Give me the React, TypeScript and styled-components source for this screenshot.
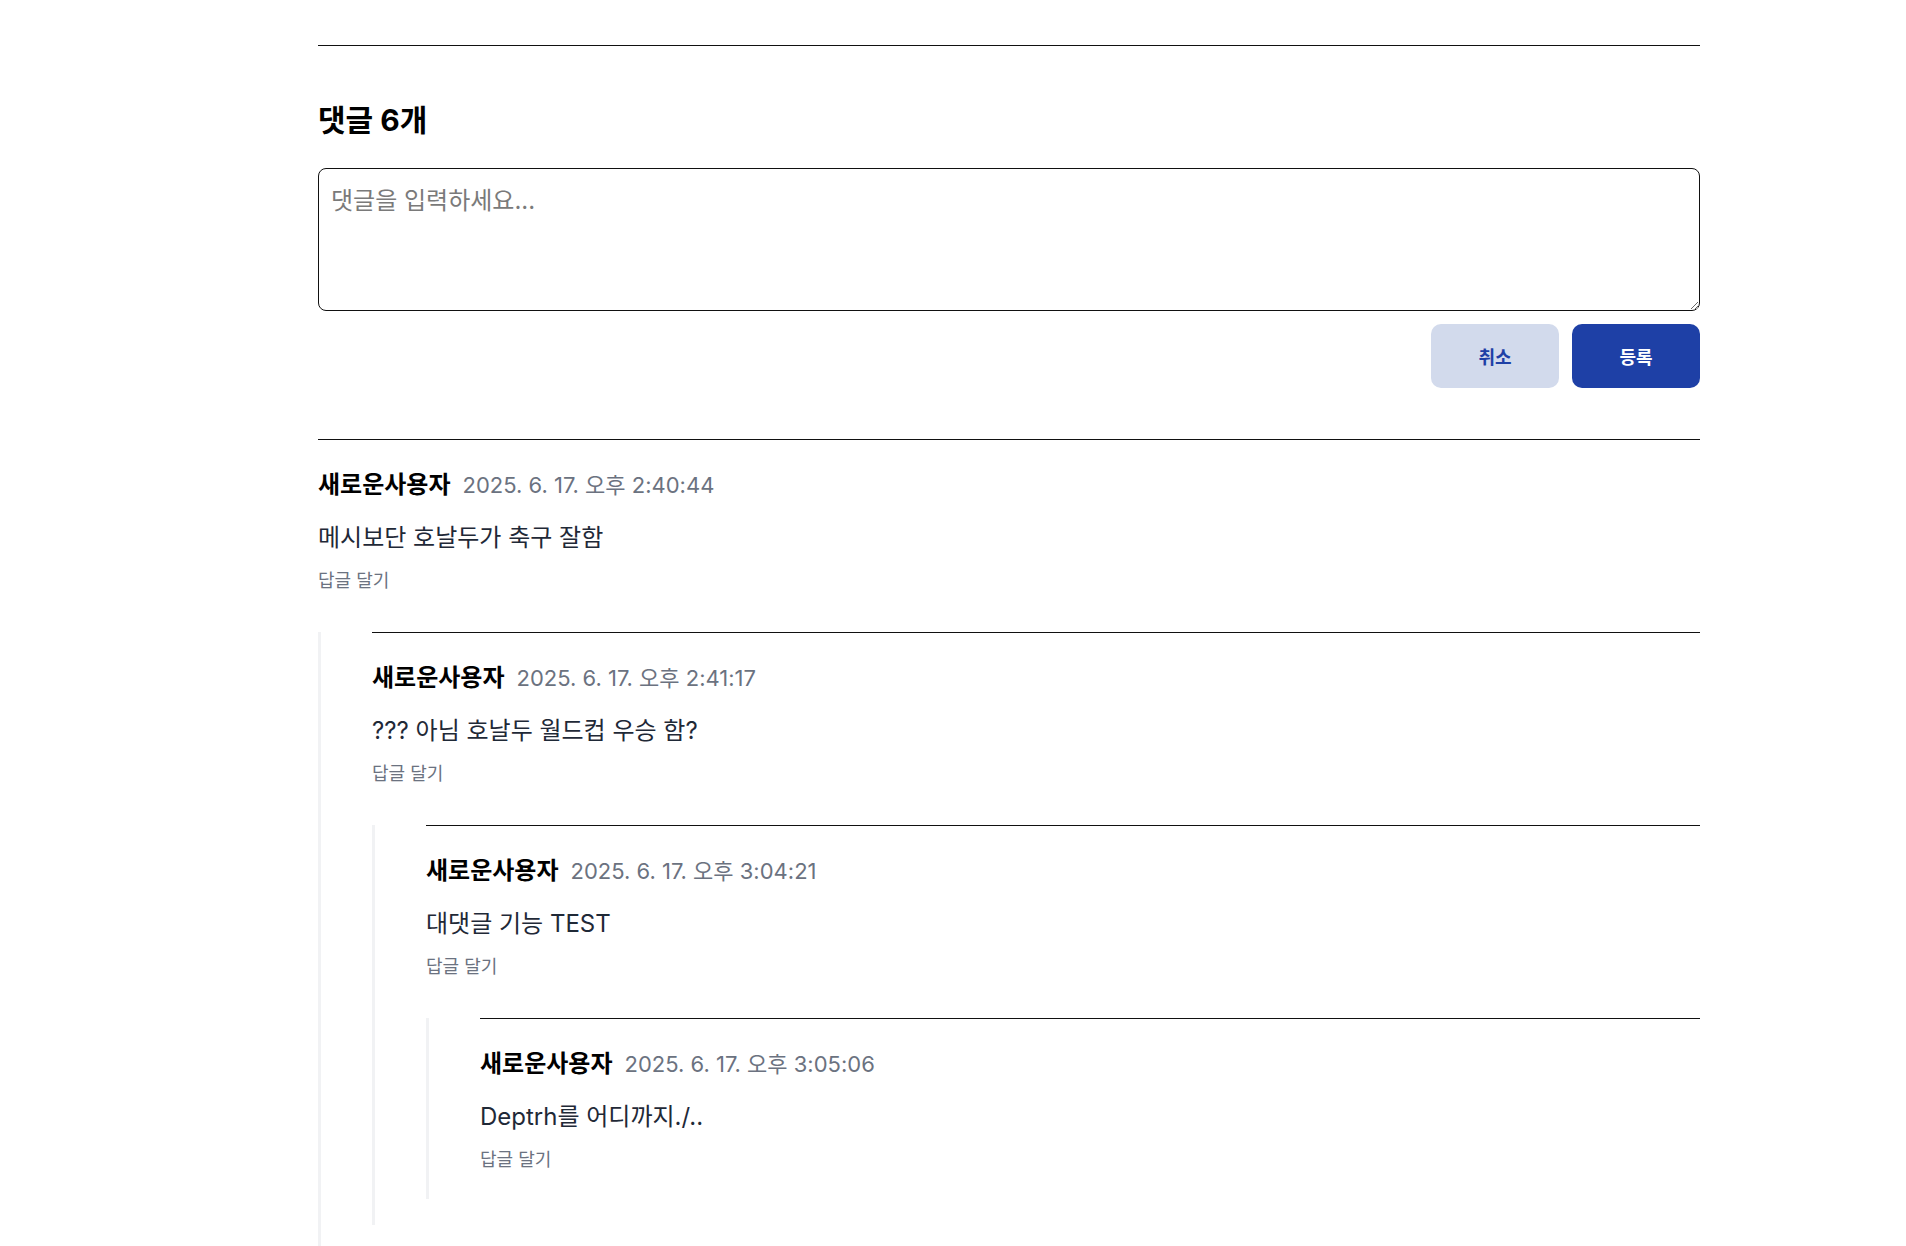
import React from "react";
import styled, { createGlobalStyle } from "styled-components";

const GlobalStyle = createGlobalStyle`
  html, body {
    margin: 0;
    padding: 0;
    background: #ffffff;
  }
  body {
    font-family: Inter, "Noto Sans CJK KR", "Noto Sans", sans-serif;
    color: #111111;
  }
  * { box-sizing: border-box; }
`;

type CommentData = {
  id: number;
  author: string;
  date: string;
  text: string;
  replies: CommentData[];
};

const comments: CommentData[] = [
  {
    id: 1,
    author: "새로운사용자",
    date: "2025. 6. 17. 오후 2:40:44",
    text: "메시보단 호날두가 축구 잘함",
    replies: [
      {
        id: 2,
        author: "새로운사용자",
        date: "2025. 6. 17. 오후 2:41:17",
        text: "??? 아님 호날두 월드컵 우승 함?",
        replies: [
          {
            id: 3,
            author: "새로운사용자",
            date: "2025. 6. 17. 오후 3:04:21",
            text: "대댓글 기능 TEST",
            replies: [
              {
                id: 4,
                author: "새로운사용자",
                date: "2025. 6. 17. 오후 3:05:06",
                text: "Deptrh를 어디까지./..",
                replies: [],
              },
            ],
          },
        ],
      },
    ],
  },
];

const Page = styled.div`
  padding: 45px 206px 0 318px;
  min-height: 1246px;
`;

const Section = styled.section`
  border-top: 1px solid #111111;
  padding-top: 54px;
`;

const Title = styled.h2`
  margin: 0 0 28px;
  font-size: 30px;
  line-height: 40px;
  font-weight: 700;
  color: #000000;
`;

const TextArea = styled.textarea`
  display: block;
  width: 100%;
  height: 143px;
  margin: 0;
  padding: 15px 12px;
  border: 1px solid #111111;
  border-radius: 8px;
  font-family: Inter, "Noto Sans CJK KR", sans-serif;
  font-size: 24px;
  line-height: 34px;
  color: #111111;
  background: #ffffff;
  resize: vertical;
  outline: none;

  &::placeholder {
    color: #7a7a7a;
  }
`;

const ButtonRow = styled.div`
  display: flex;
  justify-content: flex-end;
  gap: 13px;
  margin-top: 13px;
`;

const Button = styled.button<{ $primary?: boolean }>`
  width: 128px;
  height: 64px;
  border: none;
  border-radius: 10px;
  font-family: Inter, "Noto Sans CJK KR", sans-serif;
  font-size: 18px;
  font-weight: 700;
  cursor: pointer;
  background: ${(p) => (p.$primary ? "#1e40a6" : "#d2daec")};
  color: ${(p) => (p.$primary ? "#ffffff" : "#1e40a6")};
`;

const CommentList = styled.div`
  margin-top: 51px;
`;

const CommentItem = styled.div`
  border-top: 1px solid #111111;
  padding: 28px 0 26px;
`;

const Header = styled.div`
  display: flex;
  align-items: baseline;
  gap: 12px;
  height: 34px;
  line-height: 34px;
`;

const Author = styled.span`
  font-size: 24px;
  font-weight: 700;
  color: #000000;
`;

const DateText = styled.span`
  font-size: 22px;
  color: #6b7280;
`;

const Body = styled.p`
  margin: 19px 0 0;
  font-size: 24px;
  line-height: 34px;
  color: #1f2937;
`;

const ReplyButton = styled.button`
  display: block;
  margin: 13px 0 0;
  padding: 0;
  height: 26px;
  border: none;
  background: none;
  font-family: Inter, "Noto Sans CJK KR", sans-serif;
  font-size: 18px;
  line-height: 26px;
  color: #6b7280;
  cursor: pointer;
`;

const Replies = styled.div`
  margin-top: 38px;
  border-left: 3px solid #f1f2f4;
  padding-left: 51px;
`;

function Comment({ data }: { data: CommentData }) {
  return (
    <CommentItem>
      <Header>
        <Author>{data.author}</Author>
        <DateText>{data.date}</DateText>
      </Header>
      <Body>{data.text}</Body>
      <ReplyButton type="button">답글 달기</ReplyButton>
      {data.replies.length > 0 && (
        <Replies>
          {data.replies.map((r) => (
            <Comment key={r.id} data={r} />
          ))}
        </Replies>
      )}
    </CommentItem>
  );
}

export default function App() {
  return (
    <>
      <GlobalStyle />
      <Page>
        <Section>
          <Title>댓글 6개</Title>
          <TextArea placeholder="댓글을 입력하세요..." />
          <ButtonRow>
            <Button type="button">취소</Button>
            <Button type="button" $primary>
              등록
            </Button>
          </ButtonRow>
          <CommentList>
            {comments.map((c) => (
              <Comment key={c.id} data={c} />
            ))}
          </CommentList>
        </Section>
      </Page>
    </>
  );
}
